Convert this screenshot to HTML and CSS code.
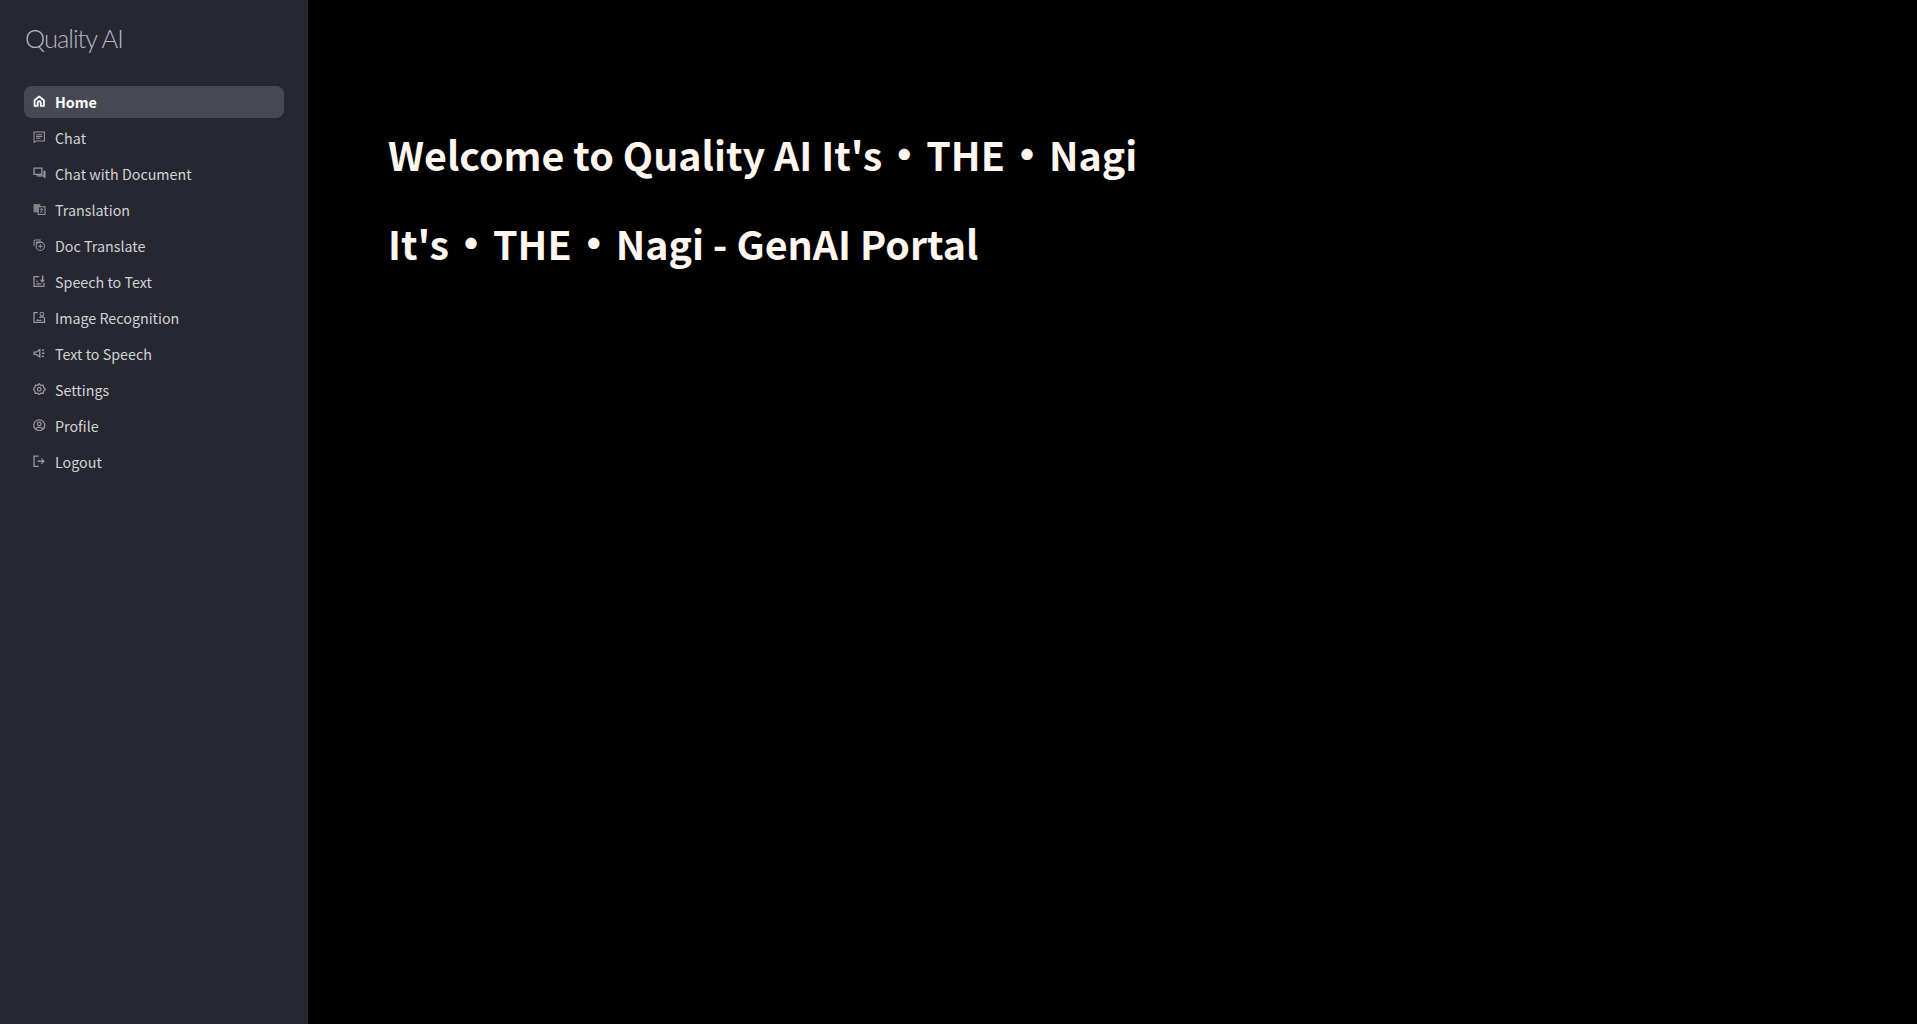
FILE: index.html
```html
<!DOCTYPE html>
<html lang="en">
<head>
    <meta charset="UTF-8">
    <meta name="viewport" content="width=device-width, initial-scale=1.0">
    <title>Quality AI</title>
    <link rel="stylesheet" href="styles.css">
</head>
<body>
    <aside class="sidebar">
        <div class="logo">Quality AI</div>
        <nav class="nav">
            <a class="nav-item active">
                <svg class="icon" viewBox="0 0 24 24"><path d="M12 3 3 10v11h6v-6a3 3 0 0 1 6 0v6h6V10z" fill="none" stroke="currentColor" stroke-width="3.500" stroke-linejoin="round"/></svg>
                <span>Home</span>
            </a>
            <a class="nav-item">
                <svg class="icon" viewBox="0 0 24 24"><path d="M2 2h20v17H6l-4 3zM6 7h12M6 10.500h12M6 14h8" fill="none" stroke="currentColor" stroke-width="2"/></svg>
                <span>Chat</span>
            </a>
            <a class="nav-item">
                <svg class="icon" viewBox="0 0 24 24"><path d="M2 2h15v12H2z" fill="none" stroke="currentColor" stroke-width="2.500"/><path d="M20 7h4v15l-5-4H7v-2h13z" fill="currentColor"/></svg>
                <span>Chat with Document</span>
            </a>
            <a class="nav-item">
                <svg class="icon" viewBox="0 0 24 24"><path d="M1 2h13v16H1z" fill="currentColor" opacity=".8"/><path d="M10 7h13v15H10z" fill="#262730" stroke="currentColor" stroke-width="2"/><path d="M13 12h7M16 10v2M14 19l4-7M15 15l4 4" fill="none" stroke="currentColor" stroke-width="1.500"/></svg>
                <span>Translation</span>
            </a>
            <a class="nav-item">
                <svg class="icon" viewBox="0 0 24 24"><path d="M2 13V5a3 3 0 0 1 3-3h10" fill="none" stroke="currentColor" stroke-width="2"/><path d="M6 9V8a2 2 0 0 1 2-2h8" fill="none" stroke="currentColor" stroke-width="2"/><circle cx="14" cy="14" r="8" fill="none" stroke="currentColor" stroke-width="2"/><path d="M14 10v8M10 14h8" stroke="currentColor" stroke-width="2"/></svg>
                <span>Doc Translate</span>
            </a>
            <a class="nav-item">
                <svg class="icon" viewBox="0 0 24 24"><path d="M21 15v7H2V3h10" fill="none" stroke="currentColor" stroke-width="2.500"/><path d="M17 1h3v8h3l-5 6-5-6h4z" fill="currentColor"/><path d="M6 12h4M6 17h10" stroke="currentColor" stroke-width="2"/></svg>
                <span>Speech to Text</span>
            </a>
            <a class="nav-item">
                <svg class="icon" viewBox="0 0 24 24"><path d="M9 3H2v19h20V13" fill="none" stroke="currentColor" stroke-width="2.500"/><circle cx="17" cy="6" r="3.500" fill="none" stroke="currentColor" stroke-width="2"/><path d="M11 13c0-2 3-3 6-3s6 1 6 3zM6 19l3-4 3 3 2-2 3 3z" fill="currentColor"/></svg>
                <span>Image Recognition</span>
            </a>
            <a class="nav-item">
                <svg class="icon" viewBox="0 0 24 24"><path d="M2 10h4l7-5v14l-7-5H2z" fill="none" stroke="currentColor" stroke-width="2.500"/><path d="M17 12h5M17 7l4-2M17 17l4 2" stroke="currentColor" stroke-width="2.500"/></svg>
                <span>Text to Speech</span>
            </a>
            <a class="nav-item">
                <svg class="icon" viewBox="0 0 24 24"><path d="M12 1.500l3 3 4.500-.5 1 4.500 3 3.500-3 3.500-1 4.500-4.500-.5-3 3-3-3-4.500.5-1-4.500-3-3.500 3-3.500 1-4.500 4.500.5z" fill="none" stroke="currentColor" stroke-width="2.500" stroke-linejoin="round"/><circle cx="12" cy="12" r="3.500" fill="none" stroke="currentColor" stroke-width="2.500"/></svg>
                <span>Settings</span>
            </a>
            <a class="nav-item">
                <svg class="icon" viewBox="0 0 24 24"><circle cx="12" cy="12" r="10.500" fill="none" stroke="currentColor" stroke-width="2.500"/><circle cx="12" cy="9.500" r="3.500" fill="none" stroke="currentColor" stroke-width="2.500"/><path d="M5 19c1.500-2.500 4-3 7-3s5.500.5 7 3" fill="none" stroke="currentColor" stroke-width="2.500"/></svg>
                <span>Profile</span>
            </a>
            <a class="nav-item">
                <svg class="icon" viewBox="0 0 24 24"><path d="M11 2H2v20h9" fill="none" stroke="currentColor" stroke-width="2.500"/><path d="M9 12h11M16 7l5 5-5 5" fill="none" stroke="currentColor" stroke-width="2.500"/></svg>
                <span>Logout</span>
            </a>
        </nav>
    </aside>

    <main class="content">
        <h1>Welcome to Quality AI It's<span class="dot">・</span>THE<span class="dot">・</span>Nagi</h1>
        <h1>It's<span class="dot">・</span>THE<span class="dot">・</span>Nagi - GenAI Portal</h1>
    </main>
</body>
</html>
```

FILE: styles.css
```css
/* General Styles */
body {
    font-family: "Noto Sans CJK JP", "Noto Sans", sans-serif;
    margin: 0;
    padding: 0;
    height: 1024px;
    overflow: hidden;
    display: flex;
    background-color: #000;
    color: #fff;
}

/* Sidebar */
.sidebar {
    width: 308px;
    flex: none;
    box-sizing: border-box;
    padding: 23px 24px 0;
    background-color: #262730;
}
.logo {
    height: 31px;
    margin-left: 1px;
    font-family: "Lato", sans-serif;
    font-weight: 300;
    font-size: 25.5px;
    line-height: 30px;
    letter-spacing: -1px;
    color: #b4b7c4;
}
.nav {
    display: flex;
    flex-direction: column;
    margin-top: 32px;
}
.nav-item {
    display: flex;
    align-items: center;
    gap: 9.5px;
    box-sizing: border-box;
    height: 32px;
    margin-bottom: 4px;
    padding: 0 9px 2px;
    border-radius: 8px;
    font-size: 14.3px;
    color: #d3d3d6;
}
.nav-item .icon {
    width: 12.5px;
    height: 12.5px;
    flex: none;
    color: #98989c;
}
.nav-item.active {
    background-color: #474952;
    color: #fff;
    font-weight: 700;
}
.nav-item.active .icon {
    color: #fff;
}

/* Main content */
.content {
    flex: 1;
    padding: 122px 80px 0;
}
h1 {
    margin: 0 0 25px;
    font-size: 39.4px;
    line-height: 64px;
    font-weight: 700;
    color: #fff6f0;
}
.dot {
    font-size: 44px;
    line-height: 1;
}
```
